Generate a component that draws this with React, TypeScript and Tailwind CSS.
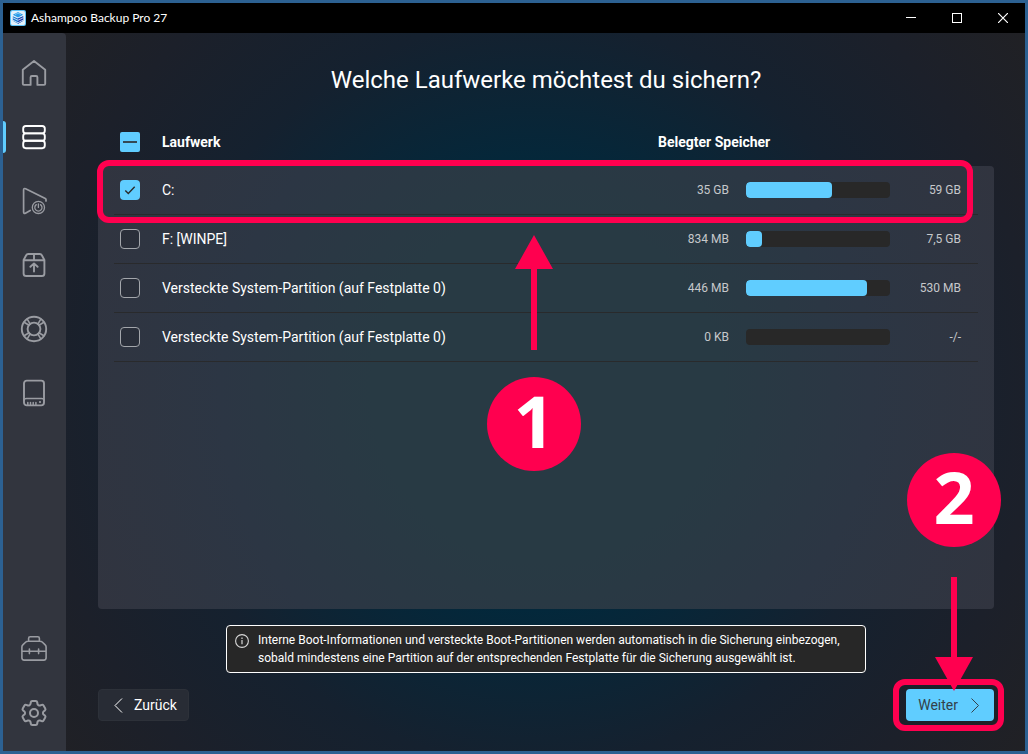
import React, { useEffect, useRef, useState } from 'react';
import { HiOutlineCog6Tooth } from 'react-icons/hi2';

interface Drive {
  id: string;
  name: string;
  used: string;
  total: string;
  percent: number;
}

const drives: Drive[] = [
  { id: 'c', name: 'C:', used: '35 GB', total: '59 GB', percent: 60 },
  { id: 'f', name: 'F: [WINPE]', used: '834 MB', total: '7,5 GB', percent: 11 },
  { id: 'sys1', name: 'Versteckte System-Partition (auf Festplatte 0)', used: '446 MB', total: '530 MB', percent: 84 },
  { id: 'sys2', name: 'Versteckte System-Partition (auf Festplatte 0)', used: '0 KB', total: '-/-', percent: 0 },
];

function Icon({ children }: { children: React.ReactNode }) {
  return (
    <svg
      viewBox="0 0 28 28"
      className="w-7 h-7"
      fill="none"
      stroke="currentColor"
      strokeWidth="1.9"
      strokeLinecap="round"
      strokeLinejoin="round"
      aria-hidden="true"
    >
      {children}
    </svg>
  );
}

const mainNav = [
  {
    label: 'Start',
    icon: (
      <Icon>
        <path d="M2.8 10.7 14 2l11.2 8.7v14.100q0 1.100-1.100 1.100H17.400v-7.600q0-1.300-1.300-1.300h-4.200q-1.300 0-1.300 1.300v7.600H3.900q-1.100 0-1.100-1.100z" />
      </Icon>
    ),
  },
  {
    label: 'Backup-Pläne',
    icon: (
      <Icon>
        <rect x="3.2" y="3" width="21.6" height="7.4" rx="2.6" />
        <rect x="3.2" y="10.4" width="21.6" height="7.4" rx="2.6" />
        <rect x="3.2" y="17.8" width="21.6" height="7.4" rx="2.6" />
      </Icon>
    ),
  },
  {
    label: 'Ausführen',
    icon: (
      <Icon>
        <path d="M26 14v-1.4q0-.7-.7-1.1L5.6 1.7Q3.6.9 3.6 3v22q0 2 1.8 1.2l4.8-2.8" strokeWidth="1.7" />
        <circle cx="18.4" cy="20.4" r="6.1" strokeWidth="1.3" />
        <path d="M18.4 16.8v3.6M16.3 17.6a3.6 3.6 0 1 0 4.2 0" strokeWidth="1.3" />
      </Icon>
    ),
  },
  {
    label: 'Wiederherstellen',
    icon: (
      <Icon>
        <path d="M3.6 9v13.4q0 2.6 2.6 2.6h15.6q2.6 0 2.6-2.6V9l-2.7-5q-.5-1-1.8-1H8.1Q6.8 3 6.3 4zM3.6 9.2h20.8M14 3v6M14 20.6v-8M10.4 15.8 14 12.4l3.6 3.4" />
      </Icon>
    ),
  },
  {
    label: 'Rettungssystem',
    icon: (
      <Icon>
        <circle cx="14" cy="14" r="12.2" />
        <circle cx="14" cy="14" r="6.4" />
        <path d="m4.1 7.2 5 3M7.2 4.1l3 5M23.9 7.2l-5 3M20.8 4.1l-3 5M4.1 20.8l5-3M7.2 23.9l3-5M23.9 20.8l-5-3M20.8 23.9l-3-5" strokeWidth="1.6" />
      </Icon>
    ),
  },
  {
    label: 'Laufwerke',
    icon: (
      <Icon>
        <rect x="4" y="1.6" width="20" height="24.8" rx="2.8" />
        <path d="M4 21.6q0-2.2 2.4-2.2h15.2q2.4 0 2.4 2.2M7.8 23.6v2M10.5 23.6v2M13.2 23.6v2M15.9 23.6v2" strokeWidth="1.5" />
        <circle cx="20" cy="23" r=".5" strokeWidth="1.2" />
      </Icon>
    ),
  },
];

const footerNav = [
  {
    label: 'Werkzeuge',
    icon: (
      <Icon>
        <path d="M8.6 6V3.4q0-1.6 1.6-1.6h7.6q1.6 0 1.6 1.6V6M1.9 12q0-1.3.9-2.1l3-2.9q.8-.8 2.2-.8h12q1.4 0 2.2.8l3 2.9q.9.8.9 2.1v10.8q0 2.3-2.3 2.3H4.2q-2.3 0-2.3-2.3zM1.9 16.2h24.2M9.4 14v4.6M18.6 14v4.6" strokeWidth="1.6" />
      </Icon>
    ),
  },
  { label: 'Einstellungen', icon: <HiOutlineCog6Tooth className="w-8 h-8" strokeWidth={1.5} /> },
];

function NavButton({ label, icon, active }: { label: string; icon: React.ReactNode; active?: boolean }) {
  return (
    <button
      aria-label={label}
      aria-current={active ? 'page' : undefined}
      className={`flex h-16 w-full items-center cursor-pointer ${active ? 'text-white' : 'text-[#9a9ca2] hover:text-white'}`}
    >
      <span className={`h-8 w-[3px] shrink-0 rounded-r-sm ${active ? 'bg-[#60cdff]' : ''}`} />
      <span className="flex flex-1 justify-center pr-1">{icon}</span>
    </button>
  );
}

interface CheckProps {
  label: string;
  checked: boolean;
  mixed?: boolean;
  onChange: () => void;
}

function Check({ label, checked, mixed, onChange }: CheckProps) {
  const ref = useRef<HTMLInputElement>(null);

  useEffect(() => {
    if (ref.current) ref.current.indeterminate = !!mixed;
  }, [mixed]);

  return (
    <label className="grid h-5 w-5 cursor-pointer">
      <input
        ref={ref}
        type="checkbox"
        aria-label={label}
        checked={checked}
        onChange={onChange}
        className={`col-start-1 row-start-1 h-5 w-5 appearance-none ${
          mixed ? 'rounded-xs bg-[#60cdff]' : checked ? 'rounded-sm bg-[#60cdff]' : 'rounded-sm border border-[#a3a6ab] bg-black/10'
        }`}
      />
      {(checked || mixed) && (
        <svg viewBox="0 0 20 20" className="pointer-events-none col-start-1 row-start-1 h-5 w-5" fill="none" stroke="#2a2a2a" aria-hidden="true">
          {mixed ? <path d="M3 10h14" strokeWidth="1.6" /> : <path d="m5.3 10.6 3 3 6.4-6.8" strokeWidth="1.4" />}
        </svg>
      )}
    </label>
  );
}

function StepBadge({ n }: { n: number }) {
  return (
    <div className="flex h-[94px] w-[94px] items-center justify-center rounded-full bg-[#ff004f] pb-2 text-[72px] leading-none font-bold text-white font-['Open_Sans',sans-serif]">
      {n}
    </div>
  );
}

export default function App() {
  const [selected, setSelected] = useState<string[]>(['c']);

  const toggle = (id: string) =>
    setSelected((prev) => (prev.includes(id) ? prev.filter((s) => s !== id) : [...prev, id]));
  const all = selected.length === drives.length;

  return (
    <div className="flex min-h-screen flex-col border-[3px] border-[#2c6192] bg-black text-sm text-white font-[Roboto,sans-serif]">
      <header className="flex h-[30px] items-center pl-[7px]">
        <svg viewBox="0 0 16 16" className="h-4 w-4" aria-hidden="true">
          <rect width="16" height="16" rx="2" fill="#5cc0f5" />
          <rect x="1" y="1" width="14" height="14" rx="1.5" fill="#e3f1fb" />
          <path d="m8 8.6 5.2-2.4v4.6L8 13.8l-5.2-3V6.2z" fill="#1a78d0" />
          <path d="M8 13.8 13.2 10.8V6.2L8 8.6z" fill="#1e3fae" />
          <path d="m2.5 7.6 5.5 2.7 5.5-2.7M2.5 10l5.5 2.7 5.5-2.7" fill="none" stroke="#e3f1fb" strokeWidth=".8" />
          <path d="m8 2 5.2 2.8L8 7.5 2.8 4.8z" fill="#2a9be8" />
          <path d="m5 4.6 3-1.5 3 1.5" fill="none" stroke="#bfe6fb" strokeWidth=".6" />
        </svg>
        <span className="flex-1 pl-[5px] text-xs font-[Lato,sans-serif]">Ashampoo Backup Pro 27</span>
        <div className="-mr-px flex h-full">
          <button aria-label="Minimieren" className="flex h-full w-[46px] items-center justify-center">
            <svg viewBox="0 0 10 10" className="h-2.5 w-2.5" stroke="#fff"><path d="M0 4.5h10" /></svg>
          </button>
          <button aria-label="Maximieren" className="flex h-full w-[46px] items-center justify-center">
            <svg viewBox="0 0 10 10" className="h-2.5 w-2.5" fill="none" stroke="#fff"><rect x=".5" y=".5" width="9" height="9" /></svg>
          </button>
          <button aria-label="Schließen" className="flex h-full w-[46px] items-center justify-center">
            <svg viewBox="0 0 10 10" className="h-2.5 w-2.5" stroke="#fff" strokeWidth="1.2"><path d="m0 0 10 10M10 0 0 10" /></svg>
          </button>
        </div>
      </header>

      <div className="flex flex-1 bg-[radial-gradient(circle_at_52%_50%,#00293d_0%,#00293d_30%,#15212f_58%,#1c202a_78%,#222123_100%)]">
        <nav className="flex w-[63px] shrink-0 flex-col justify-between rounded-tr bg-[#32353e] pt-2 pb-1.5">
          <div>
            {mainNav.map((item, i) => (
              <NavButton key={item.label} label={item.label} icon={item.icon} active={i === 1} />
            ))}
          </div>
          <div>
            {footerNav.map((item) => (
              <NavButton key={item.label} label={item.label} icon={item.icon} />
            ))}
          </div>
        </nav>

        <main className="flex flex-1 flex-col pt-[31px] pr-[31px] pb-[30px] pl-8">
          <h1 className="text-center text-2xl">Welche Laufwerke möchtest du sichern?</h1>

          <div className="mt-[34px] mb-3 flex h-6 items-center px-4 font-bold">
            <div className="w-12 pl-1.5">
              <Check
                label="Alle Laufwerke"
                checked={all}
                mixed={selected.length > 0 && !all}
                onChange={() => setSelected(all ? [] : drives.map((d) => d.id))}
              />
            </div>
            <span className="flex-1">Laufwerk</span>
            <span className="w-80">Belegter Speicher</span>
          </div>

          <section className="relative flex-1 rounded bg-[radial-gradient(circle_at_50%_50%,#283a44_0%,#283a44_35%,#2c3644_65%,#31343f_100%)] px-4">
            <table className="w-full border-separate border-spacing-0" aria-label="Laufwerke">
              <tbody>
                {drives.map((d) => (
                  <tr key={d.id} className="h-[49px] *:border-b *:border-[#292a2c]">
                    <td className="w-12 pl-1.5">
                      <Check label={d.name} checked={selected.includes(d.id)} onChange={() => toggle(d.id)} />
                    </td>
                    <td>{d.name}</td>
                    <td className="w-[72px] pr-px text-right text-xs text-[#c6c8cb]">{d.used}</td>
                    <td className="w-44 px-4">
                      <div className="h-4 overflow-hidden rounded bg-[#282828]">
                        <div className="h-full rounded bg-[#60cdff]" style={{ width: `${d.percent}%` }} />
                      </div>
                    </td>
                    <td className="w-[72px] pr-[17px] text-right text-xs text-[#c6c8cb]">{d.total}</td>
                  </tr>
                ))}
              </tbody>
            </table>

            {/* Step 1: drive selection */}
            <div className="pointer-events-none absolute -top-1.5 right-[21px] -left-px h-[63px] rounded-xl border-[6px] border-[#ff004f]" />
            <div className="pointer-events-none absolute top-[69px] left-[389px] flex flex-col items-center gap-[27px]">
              <svg viewBox="0 0 38 115" className="h-[115px] w-[38px]" fill="#ff004f" aria-hidden="true">
                <path d="M19 0 38 34H22v81h-6V34H0z" />
              </svg>
              <StepBadge n={1} />
            </div>
          </section>

          <div className="mx-auto mt-4 flex w-[640px] max-w-full gap-2 rounded border border-white bg-[#272727] px-[7px] py-[5px] text-xs leading-[18px]">
            <svg viewBox="0 0 16 16" className="mt-0.5 h-4 w-4 shrink-0" fill="none" stroke="#d8d8d8" aria-hidden="true">
              <circle cx="8" cy="8" r="6.4" strokeWidth="1.1" />
              <path d="M8 7v4.2M8 4.6v1.3" strokeWidth="1.2" />
            </svg>
            <p>
              Interne Boot-Informationen und versteckte Boot-Partitionen werden automatisch in die Sicherung einbezogen,
              sobald mindestens eine Partition auf der entsprechenden Festplatte für die Sicherung ausgewählt ist.
            </p>
          </div>

          <div className="mt-4 flex justify-between">
            <button className="flex h-8 items-center gap-2 rounded border border-[#2d3139] bg-[#282c35] px-[11px] cursor-pointer">
              <svg viewBox="0 0 16 16" className="h-4 w-4" fill="none" stroke="currentColor" aria-hidden="true">
                <path d="m12 1.5-7 7 7 7" />
              </svg>
              Zurück
            </button>

            <div className="relative">
              <button className="flex h-8 items-center gap-2 rounded bg-[#60cdff] px-3 text-[#33414a] cursor-pointer">
                Weiter
                <svg viewBox="0 0 16 16" className="h-4 w-4" fill="none" stroke="currentColor" aria-hidden="true">
                  <path d="m5.5 1.5 7 7-7 7" />
                </svg>
              </button>

              {/* Step 2: continue */}
              <div className="pointer-events-none absolute -inset-y-2.5 -right-2.5 -left-[13px] rounded-xl border-[6px] border-[#ff004f]" />
              <div className="pointer-events-none absolute -right-[7px] bottom-[30px] flex flex-col items-center gap-[30px]">
                <StepBadge n={2} />
                <svg viewBox="0 0 38 114" className="h-[114px] w-[38px]" fill="#ff004f" aria-hidden="true">
                  <path d="M16 0h6v80h16L19 114 0 80h16z" />
                </svg>
              </div>
            </div>
          </div>
        </main>
      </div>
    </div>
  );
}
